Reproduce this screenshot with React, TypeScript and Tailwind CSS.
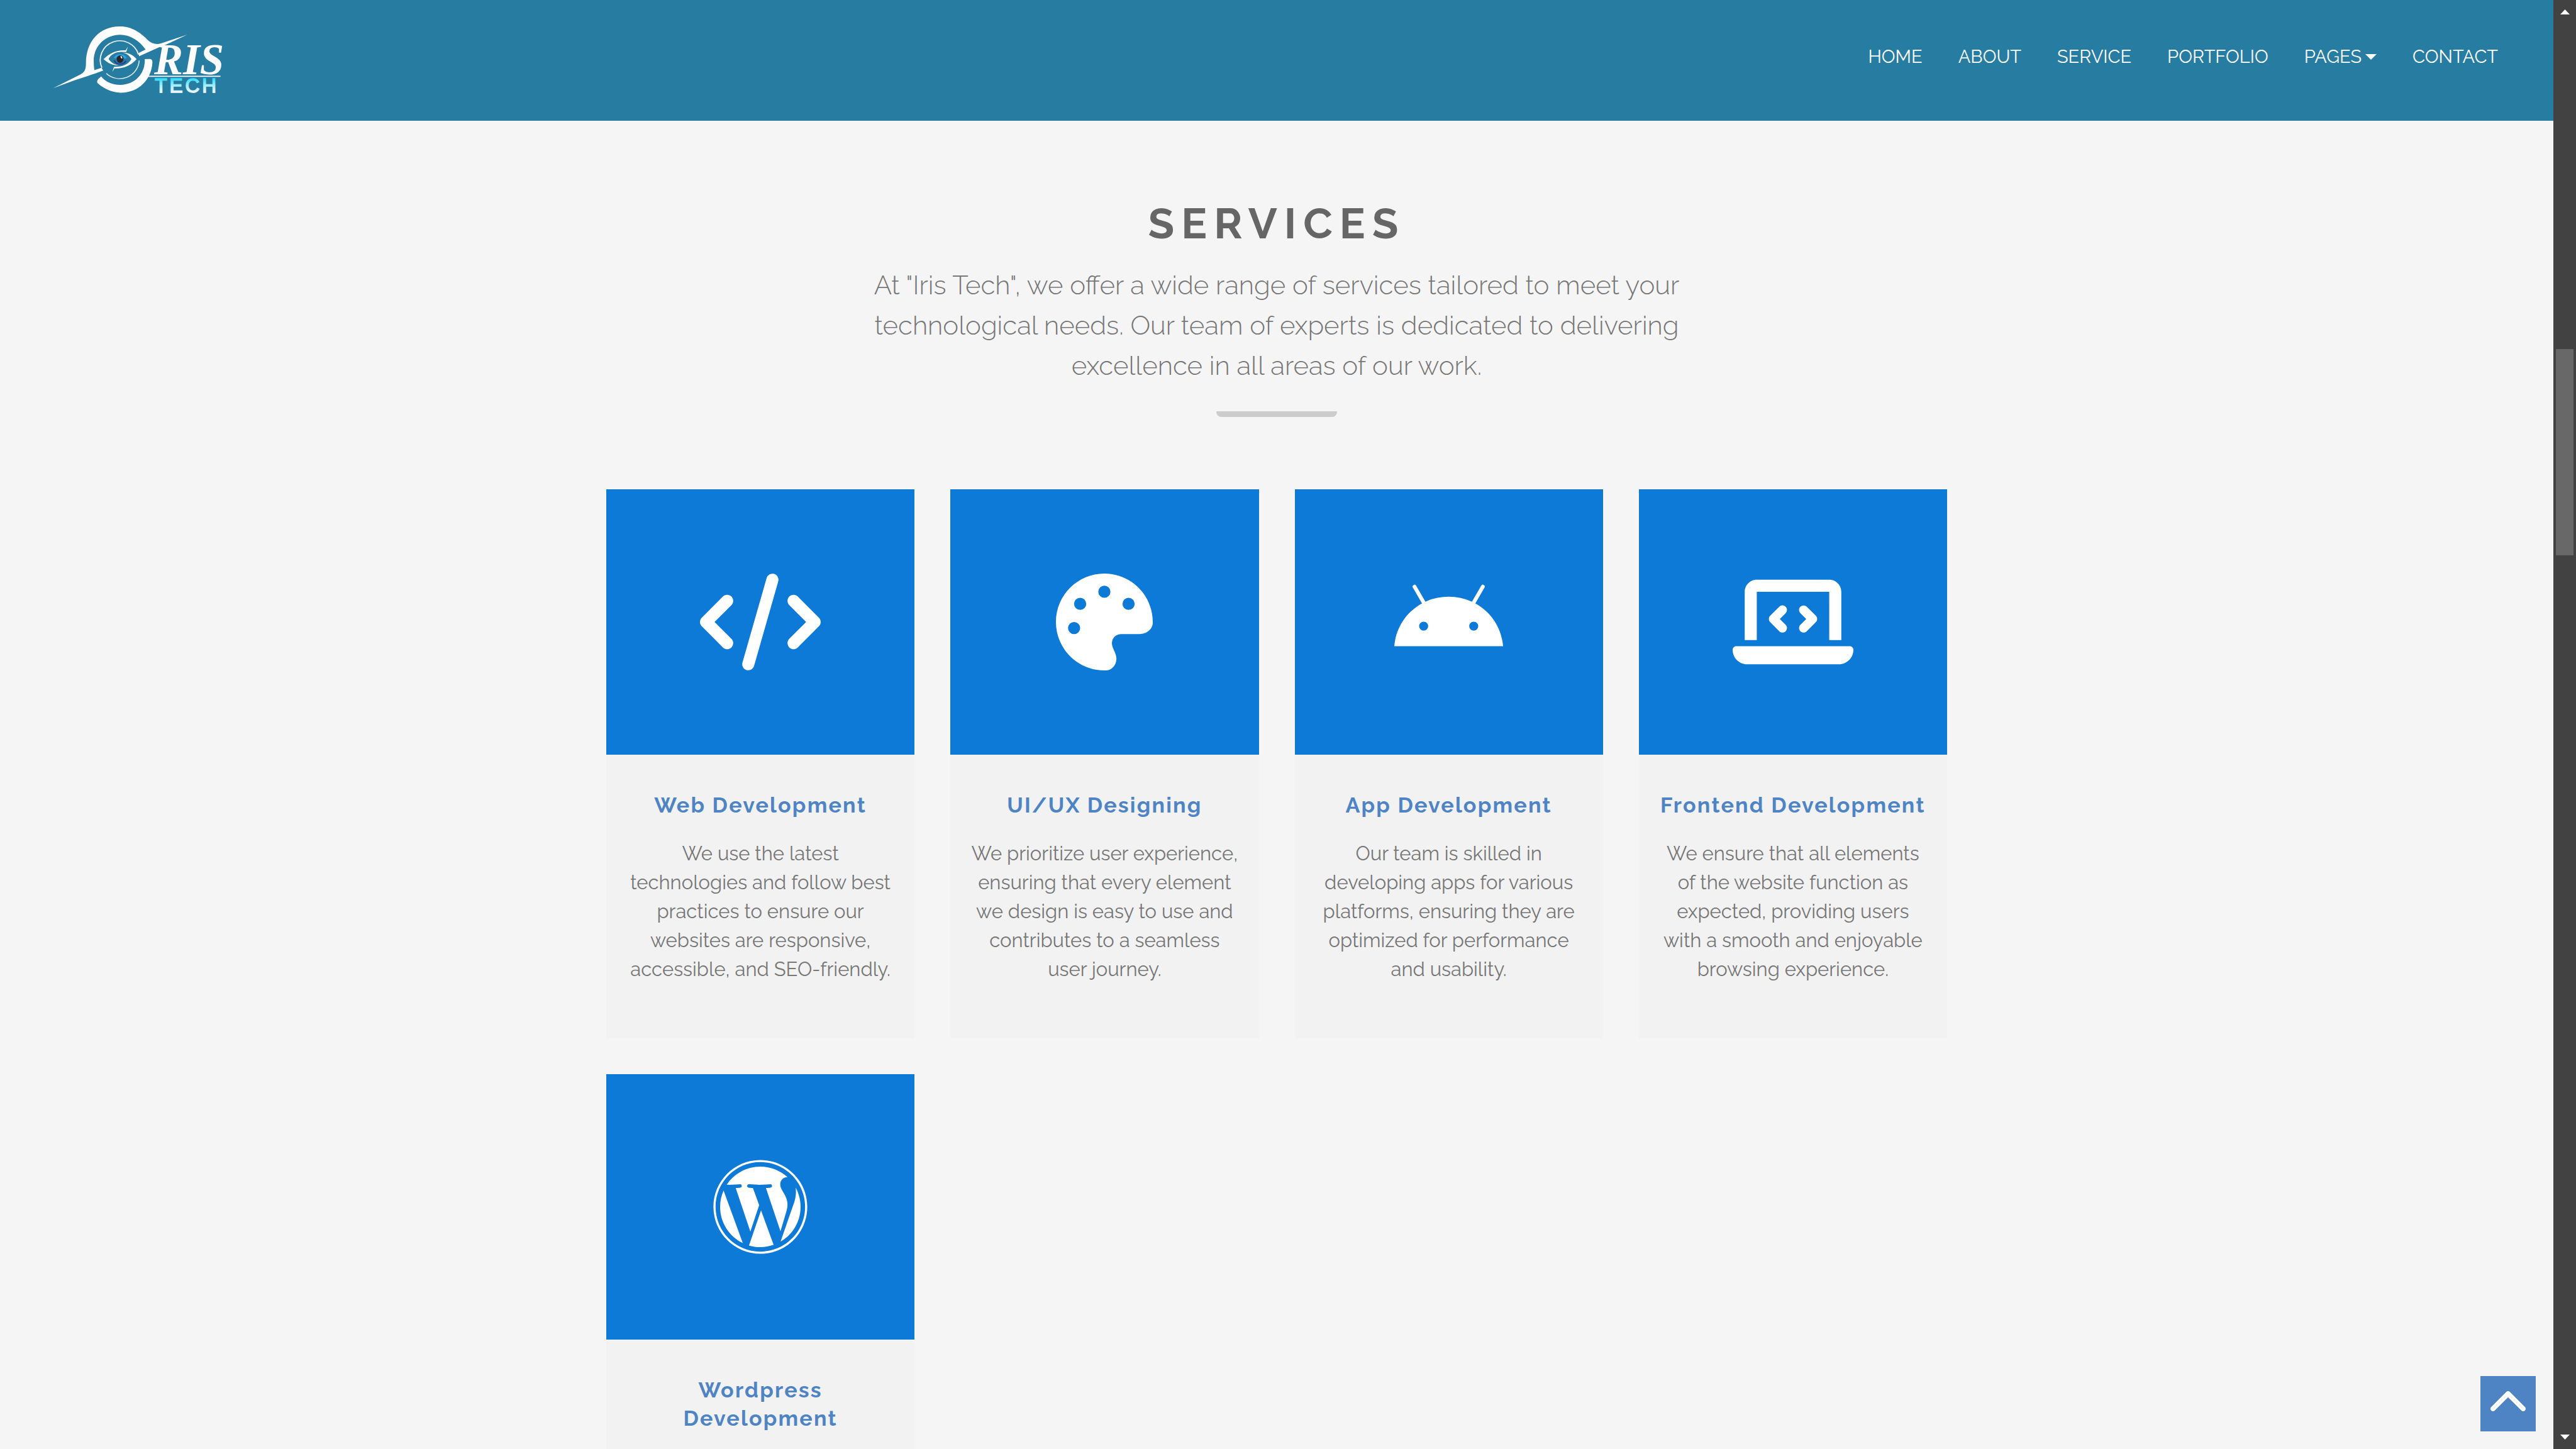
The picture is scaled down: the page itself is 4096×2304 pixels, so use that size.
import React from "react";
import type { IconType } from "react-icons";
import {
  FaAndroid,
  FaChevronUp,
  FaCode,
  FaLaptopCode,
  FaPalette,
  FaWordpress,
} from "react-icons/fa6";

type Service = { title: string; text?: string; icon: IconType; iconWidth: string };

const services: Service[] = [
  {
    title: "Web Development",
    text: "We use the latest technologies and follow best practices to ensure our websites are responsive, accessible, and SEO-friendly.",
    icon: FaCode,
    iconWidth: "w-48",
  },
  {
    title: "UI/UX Designing",
    text: "We prioritize user experience, ensuring that every element we design is easy to use and contributes to a seamless user journey.",
    icon: FaPalette,
    iconWidth: "w-[154px]",
  },
  {
    title: "App Development",
    text: "Our team is skilled in developing apps for various platforms, ensuring they are optimized for performance and usability.",
    icon: FaAndroid,
    iconWidth: "w-[173px]",
  },
  {
    title: "Frontend Development",
    text: "We ensure that all elements of the website function as expected, providing users with a smooth and enjoyable browsing experience.",
    icon: FaLaptopCode,
    iconWidth: "w-48",
  },
  { title: "Wordpress Development", icon: FaWordpress, iconWidth: "w-[154px]" },
];

const links = ["HOME", "ABOUT", "SERVICE", "PORTFOLIO", "PAGES", "CONTACT"];

function Logo() {
  return (
    <svg viewBox="130 82 1270 530" className="h-[115px] w-[276px]" role="img" aria-label="Iris Tech">
      <defs>
        <linearGradient id="tech" gradientUnits="userSpaceOnUse" x1="0" y1="478" x2="0" y2="581">
          <stop offset="0" stopColor="#2fdcff" />
          <stop offset="0.5" stopColor="#a5eefb" />
          <stop offset="1" stopColor="#f4f4f4" />
        </linearGradient>
      </defs>
      <g transform="scale(1 0.8167)">
        <g fill="#fdfdfd">
          <path d="M140 672 L335 552 C365 532 381 515 381 450 C381 250 480 118 630 118 C720 118 785 178 838 244 C868 276 905 286 955 260 L1122 192 L965 282 L940 292 L770 385 L767 356 L818 325 C770 240 700 192 632 192 C530 192 438 285 438 425 C438 460 440 490 443 509 L495 488 L507 514 C440 545 350 580 290 604 Z" />
          <path d="M493 566 C520 612 570 642 632 642 C740 642 817 540 812 411 L850 410 C863 411 868 420 868 440 C862 590 770 712 635 712 C570 712 500 668 465 624 C459 602 470 590 493 566 Z" />
          <path d="M510 411 C555 355 610 326 672 332 L688 300 L676 347 C640 345 612 347 590 358 C568 370 552 392 547 411 C560 435 580 458 622 467 C570 470 535 440 510 411 Z" />
          <path d="M752 411 C710 470 655 498 590 494 L574 526 L586 480 C650 482 690 460 714 411 C700 380 680 360 648 352 C700 355 730 380 752 411 Z" />
          <rect x="835" y="560" width="532" height="10" />
        </g>
        <g fill="none">
          <path d="M498 488 A143 172 0 1 1 766 370" stroke="#e8f1f5" strokeWidth="9" />
          <path d="M771 424 A143 172 0 0 1 530 539" stroke="#e8f1f5" strokeWidth="7" />
          <path d="M592 402 A44 48 0 0 1 672 404" stroke="#2fa4e4" strokeWidth="15" />
          <path d="M589 422 A45 46 0 0 0 674 426" stroke="#2a3f8f" strokeWidth="11" />
        </g>
        <ellipse cx="631" cy="411" rx="25" ry="34" fill="#29252a" />
        <ellipse cx="641" cy="394" rx="5" ry="12" fill="#ffffff" transform="rotate(-25 641 394)" />
      </g>
      <text
        x="880"
        y="444"
        fill="#fdfdfd"
        className="font-['Liberation_Serif',serif] text-[318px] font-bold italic"
      >
        RIS
      </text>
      <text
        x="886"
        y="580"
        fill="url(#tech)"
        stroke="url(#tech)"
        strokeWidth="7"
        className="font-['Liberation_Sans',sans-serif] text-[146px] tracking-[18px]"
      >
        TECH
      </text>
    </svg>
  );
}

function Triangle({ className, points }: { className: string; points: string }) {
  return (
    <svg viewBox="0 0 16 8" preserveAspectRatio="none" className={className} aria-hidden="true">
      <polygon points={points} fill="#ffffff" />
    </svg>
  );
}

function Header() {
  return (
    <header className="flex h-48 shrink-0 items-start justify-between bg-[#277ca2] pr-[88px] pl-[82px]">
      <a href="#home" className="pt-[39px]">
        <Logo />
      </a>
      <nav className="flex gap-[57px] pt-[68px] text-[29px] leading-[44px] text-white">
        {links.map((link) => (
          <a key={link} href={"#" + link.toLowerCase()} className="flex items-center gap-[6px]">
            {link}
            {link === "PAGES" && <Triangle className="h-[9px] w-[18px]" points="0,0 16,0 8,8" />}
          </a>
        ))}
      </nav>
    </header>
  );
}

function ServiceCard({ title, text, icon: Icon, iconWidth }: Service) {
  return (
    <article className="bg-[#f2f2f2] pb-[87px] text-center">
      <div className="flex h-[422px] items-center justify-center bg-[#0d7ad7]">
        <Icon className={"h-[154px] text-white " + iconWidth} />
      </div>
      <h3 className="mt-[58px] px-[26px] text-[34px] leading-[45px] font-bold tracking-[0.065em] text-[#4f84c4]">
        {title}
      </h3>
      {text && <p className="mt-[31px] px-8 text-[31px] leading-[46px] text-[#777777]">{text}</p>}
    </article>
  );
}

function Scrollbar() {
  return (
    <div className="flex w-9 shrink-0 flex-col bg-[#424242]">
      <button type="button" aria-label="Scroll up" className="flex h-9 justify-center pt-[15px]">
        <Triangle className="h-2 w-[15px]" points="8,0 16,8 0,8" />
      </button>
      <div className="grow-[519]" />
      <div className="mx-1 grow-[328] bg-[#686868]" />
      <div className="grow-[1385]" />
      <button type="button" aria-label="Scroll down" className="flex h-9 items-end justify-center pb-[15px]">
        <Triangle className="h-2 w-[15px]" points="0,0 16,0 8,8" />
      </button>
    </div>
  );
}

export default function App() {
  return (
    <div className="flex h-screen overflow-hidden bg-[#f5f5f5] font-['Raleway','Lato',sans-serif]">
      <div className="relative flex min-w-0 flex-1 flex-col overflow-hidden">
        <Header />
        <main className="mx-auto w-full max-w-[2132px] pt-[122px]">
          <section className="flex flex-col items-center text-center">
            <h2 className="text-[68px] leading-[82px] font-bold tracking-[11px] text-[#666666]">SERVICES</h2>
            <p className="mt-[26px] max-w-[1360px] text-[42px] leading-[64px] font-light text-[#777777]">
              At "Iris Tech", we offer a wide range of services tailored to meet your technological needs. Our team
              of experts is dedicated to delivering excellence in all areas of our work.
            </p>
            <div className="mt-10 h-[9px] w-48 rounded-b-lg bg-[#cccccc]" />
          </section>
          <div className="mt-[115px] grid grid-cols-4 gap-[57px]">
            {services.map((service) => (
              <ServiceCard key={service.title} {...service} />
            ))}
          </div>
        </main>
        <button
          type="button"
          aria-label="Back to top"
          className="absolute right-7 bottom-7 flex h-[88px] w-[88px] items-center justify-center bg-[#4f84c4] text-white"
        >
          <FaChevronUp className="h-16 w-16" />
        </button>
      </div>
      <Scrollbar />
    </div>
  );
}
